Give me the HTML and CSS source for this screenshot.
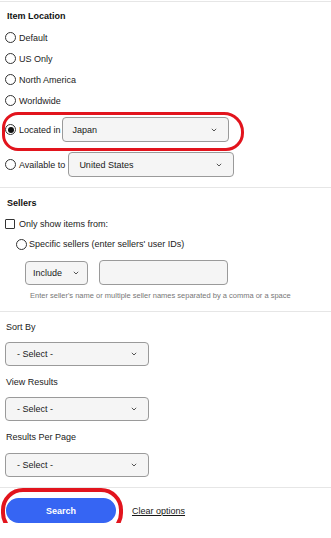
FILE: index.html
```html
<!DOCTYPE html>
<html lang="en">
    <head>
        <meta charset="UTF-8">
        <title>Advanced Search Options</title>
        <link rel="stylesheet" href="styles.css">
    </head>
    <body>
        <div class="panel">
            <section class="group location">
                <h3 class="group-title">Item Location</h3>
                <div class="opt"><span class="radio"></span>Default</div>
                <div class="opt"><span class="radio"></span>US Only</div>
                <div class="opt"><span class="radio"></span>North America</div>
                <div class="opt"><span class="radio"></span>Worldwide</div>
                <div class="opt-row located">
                    <span class="radio checked"></span>Located in
                    <div class="fake-select wide">
                        <span>Japan</span>
                        <svg class="chev" width="6" height="4" viewBox="0 0 6 4"><path d="M0.8 0.8 L3 3 L5.2 0.8" fill="none" stroke="#555" stroke-width="1"/></svg>
                    </div>
                </div>
                <div class="opt-row available">
                    <span class="radio"></span>Available to
                    <div class="fake-select wide">
                        <span>United States</span>
                        <svg class="chev" width="6" height="4" viewBox="0 0 6 4"><path d="M0.8 0.8 L3 3 L5.2 0.8" fill="none" stroke="#555" stroke-width="1"/></svg>
                    </div>
                </div>
            </section>

            <section class="group sellers">
                <h3 class="group-title">Sellers</h3>
                <div class="opt check-row"><span class="checkbox"></span>Only show items from:</div>
                <div class="opt specific"><span class="radio"></span>Specific sellers (enter sellers' user IDs)</div>
                <div class="seller-inputs">
                    <div class="fake-select include">
                        <span>Include</span>
                        <svg class="chev" width="6" height="4" viewBox="0 0 6 4"><path d="M0.8 0.8 L3 3 L5.2 0.8" fill="none" stroke="#555" stroke-width="1"/></svg>
                    </div>
                    <div class="text-input"></div>
                </div>
                <p class="hint">Enter seller's name or multiple seller names separated by a comma or a space</p>
            </section>

            <section class="group prefs">
                <div class="field-label sort">Sort By</div>
                <div class="fake-select short">
                    <span>- Select -</span>
                    <svg class="chev" width="6" height="4" viewBox="0 0 6 4"><path d="M0.8 0.8 L3 3 L5.2 0.8" fill="none" stroke="#555" stroke-width="1"/></svg>
                </div>
                <div class="field-label view">View Results</div>
                <div class="fake-select short">
                    <span>- Select -</span>
                    <svg class="chev" width="6" height="4" viewBox="0 0 6 4"><path d="M0.8 0.8 L3 3 L5.2 0.8" fill="none" stroke="#555" stroke-width="1"/></svg>
                </div>
                <div class="field-label per-page">Results Per Page</div>
                <div class="fake-select short last">
                    <span>- Select -</span>
                    <svg class="chev" width="6" height="4" viewBox="0 0 6 4"><path d="M0.8 0.8 L3 3 L5.2 0.8" fill="none" stroke="#555" stroke-width="1"/></svg>
                </div>
            </section>

            <div class="actions">
                <button class="search-btn">Search</button>
                <a class="clear-link" href="#">Clear options</a>
            </div>

            <!-- hand drawn red marks on the screenshot -->
            <div class="mark mark-located"></div>
            <div class="mark mark-search"></div>
        </div>
    </body>
</html>
```

FILE: styles.css
```css
* {
    padding: 0;
    margin: 0;
    box-sizing: border-box;
}
body {
    background: #ffffff;
    font-family: "Liberation Sans", Arial, sans-serif;
    font-size: 9px;
    color: #222222;
}
.panel {
    position: relative;
    margin-top: 1px;
    border-top: 1px solid #e6e6e6;
}
.group {
    border-bottom: 1px solid #e6e6e6;
    padding-left: 5px;
}
.group-title {
    font-size: 9px;
    font-weight: bold;
    line-height: 12px;
    padding-left: 2px;
    color: #111111;
}
.location {
    padding-top: 8px;
    padding-bottom: 10px;
}
.location .group-title {
    margin-bottom: 5px;
}
.opt {
    display: flex;
    align-items: center;
    height: 21px;
}
.opt-row {
    display: flex;
    align-items: center;
    height: 25px;
}
.located {
    margin-top: 6px;
}
.available {
    margin-top: 10px;
}
.radio {
    width: 11px;
    height: 11px;
    border: 1px solid #333333;
    border-radius: 50%;
    margin-right: 3px;
    display: flex;
    align-items: center;
    justify-content: center;
    flex-shrink: 0;
}
.radio.checked::after {
    content: "";
    width: 6px;
    height: 6px;
    border-radius: 50%;
    background: #111111;
}
.checkbox {
    width: 10px;
    height: 10px;
    border: 1px solid #333333;
    border-radius: 1px;
    margin-right: 4px;
}
.fake-select {
    display: flex;
    align-items: center;
    justify-content: space-between;
    height: 25px;
    background: #f5f5f5;
    border: 1px solid #9a9a9a;
    border-radius: 4px;
    padding: 0 11px 0 10px;
    color: #191919;
}
.wide {
    width: 167px;
    margin-left: 1px;
}
.available .wide {
    width: 166px;
    margin-left: 3px;
}
.chev {
    display: block;
}
.sellers {
    padding-top: 9px;
    padding-bottom: 11px;
}
.sellers .group-title {
    margin-bottom: 5px;
}
.check-row {
    height: 20px;
}
.specific {
    height: 20px;
    padding-left: 11px;
}
.specific .radio {
    width: 11px;
    height: 11px;
    margin-right: 2px;
}
.seller-inputs {
    display: flex;
    align-items: center;
    gap: 11px;
    margin-top: 6px;
    padding-left: 20px;
}
.include {
    width: 63px;
    height: 24px;
    padding: 0 8px 0 7px;
}
.text-input {
    width: 129px;
    height: 25px;
    background: #f5f5f5;
    border: 1px solid #9a9a9a;
    border-radius: 4px;
}
.hint {
    font-size: 7.5px;
    line-height: 8px;
    color: #777777;
    margin-top: 7px;
    padding-left: 25px;
}
.prefs {
    padding-top: 9px;
    padding-bottom: 10px;
}
.field-label {
    line-height: 12px;
    padding-left: 1px;
}
.short {
    width: 144px;
    height: 24px;
    padding-left: 11px;
    margin-top: 9px;
}
.view,
.per-page {
    margin-top: 10px;
}
.per-page + .short {
    margin-top: 10px;
}
.actions {
    display: flex;
    align-items: center;
    padding: 10px 0 0 6px;
}
.search-btn {
    width: 110px;
    height: 25px;
    border: none;
    border-radius: 13px;
    background: #3665f3;
    color: #ffffff;
    font-family: "Liberation Sans", Arial, sans-serif;
    font-size: 9px;
    font-weight: bold;
}
.clear-link {
    margin-left: 16px;
    color: #191919;
    font-size: 9px;
    text-decoration: underline;
}
.mark {
    position: absolute;
    border: 3px solid #e2141d;
    pointer-events: none;
}
.mark-located {
    left: 2px;
    top: 110px;
    width: 242px;
    height: 39px;
    border-radius: 16px 20px 18px 16px;
}
.mark-search {
    left: 1px;
    top: 486px;
    width: 122px;
    height: 47px;
    border-width: 4px;
    border-radius: 22px;
}
```
